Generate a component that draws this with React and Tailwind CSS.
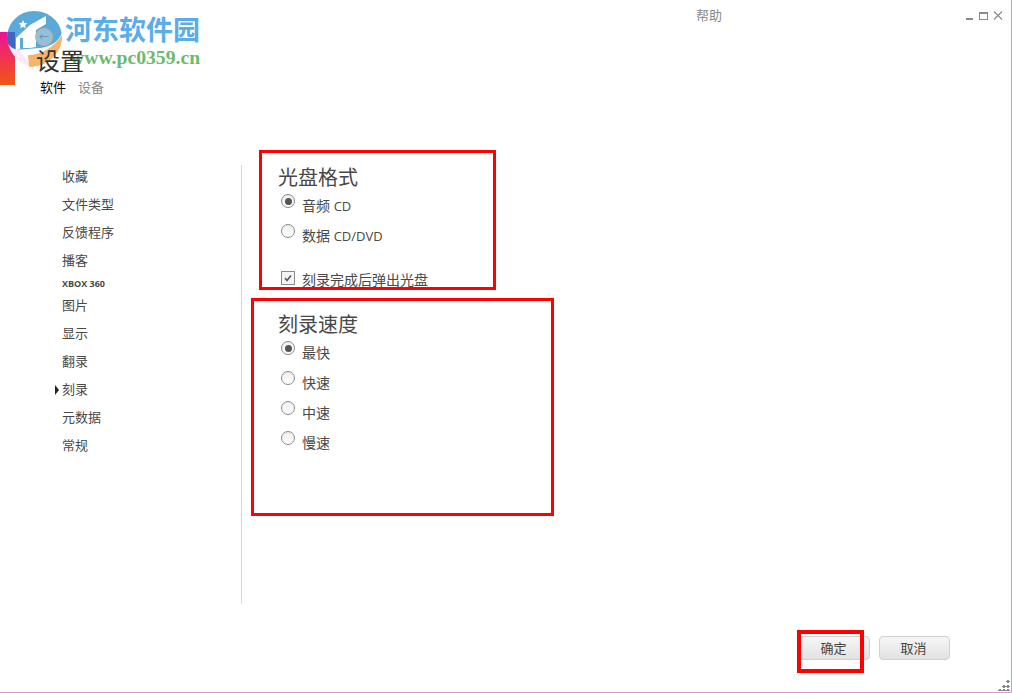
const CJK = "font-['Open_Sans','Noto_Sans_CJK_SC',sans-serif]";

const navItems = [
  { label: "收藏", h: "h-[28px]" },
  { label: "文件类型", h: "h-[28px]" },
  { label: "反馈程序", h: "h-[28px]" },
  { label: "播客", h: "h-[28px]" },
  { label: "XBOX 360", h: "h-[17px]", small: true },
  { label: "图片", h: "h-[28px]" },
  { label: "显示", h: "h-[28px]" },
  { label: "翻录", h: "h-[28px]" },
  { label: "刻录", h: "h-[28px]", active: true },
  { label: "元数据", h: "h-[28px]" },
  { label: "常规", h: "h-[28px]" },
];

const Radio = ({ checked }) => (
  <span className="relative mt-[-2px] flex h-[14px] w-[14px] shrink-0 items-center justify-center rounded-full border border-[#8a8a8a] bg-gradient-to-b from-[#eeeeee] to-white">
    {checked && <span className="h-[7px] w-[7px] rounded-full bg-[#555]" />}
  </span>
);

const RadioRow = ({ children, checked }) => (
  <div className="flex h-[30px] items-start gap-[7px] pl-[3px] text-[14px] leading-[18px] text-[#484848]">
    <Radio checked={checked} />
    <span className="mt-[1px]">{children}</span>
  </div>
);

const Logo = () => (
  <div className="pointer-events-none absolute left-0 top-0">
    <svg width="70" height="90" viewBox="0 0 70 90" className="absolute left-0 top-0">
      <defs>
        <linearGradient id="pinkbar" x1="0" y1="0" x2="0" y2="1">
          <stop offset="0" stopColor="#ee1199" />
          <stop offset="1" stopColor="#f2560f" />
        </linearGradient>
      </defs>
      <rect x="0" y="32" width="15" height="53" fill="url(#pinkbar)" />
      {/* blue dome */}
      <path d="M34 11C50 11 61 23 61.500 34C58 42 50 47 40 48L14 50C9 46 7 42 7 38C7 23 19 11 34 11z" fill="#5aa9d6" />
      <path d="M7 38C7 42 9 46 15 50V32H8z" fill="#3f66c4" />
      {/* white swoosh under the dome */}
      <path d="M8 44C12 56 20 64 30 66C28 60 22 54 20 50C16 50 11 48 8 44z" fill="#fbeaf3" />
      {/* orange crescent */}
      <path d="M62 35C63 52 48 67 29 67L28 55C42 55 54 47 62 35z" fill="#f4b469" />
      {/* house */}
      <path d="M16 38L30 25V48H23V38H20V49L16 50z" fill="#fff" />
      <path d="M30 25L46 16L46 24L36 30V47L30 48z" fill="#fff" />
      <path d="M23 20l1.400 3 3 .3-2.300 2 .7 3-2.800-1.600-2.800 1.600.7-3-2.300-2 3-.3z" fill="#fff" />
    </svg>
    <div className="absolute left-[65px] top-[11px] whitespace-nowrap font-['Noto_Sans_CJK_SC',sans-serif] text-[27px] font-bold leading-[36px] text-[#5aade8]">
      河东软件园
    </div>
    <div className="absolute left-[70px] top-[46px] whitespace-nowrap font-['Liberation_Serif',serif] text-[19.7px] font-bold leading-[22px] text-[#6cba6c]">
      www.pc0359.cn
    </div>
  </div>
);

export default function App() {
  return (
    <div className={`relative flex h-[693px] w-[1012px] flex-col overflow-hidden border-b border-r border-[#f08adc] bg-white ${CJK}`}>
      <Logo />

      {/* title bar */}
      <div className="relative flex h-[30px] items-center justify-end pr-[8px] pt-[1px]">
        <span className="mr-[243px] text-[13px] text-[#8a8a8a]">帮助</span>
        <div className="flex items-center gap-[5px]">
          <svg width="9" height="9" viewBox="0 0 9 9"><rect x="1" y="7" width="7" height="2" fill="#8a8a8a" /></svg>
          <svg width="9" height="9" viewBox="0 0 9 9"><rect x=".5" y="1.500" width="8" height="7" fill="none" stroke="#8a8a8a" /><rect x="0" y="1" width="9" height="2" fill="#8a8a8a" /></svg>
          <svg width="10" height="9" viewBox="0 0 10 9"><path d="M1 .5l8 8M9 .5l-8 8" stroke="#8a8a8a" strokeWidth="1.100" /></svg>
        </div>
      </div>

      {/* header */}
      <div className="relative pl-[36px]">
        <div className="relative mt-[-13px] h-[28px]">
          <span className="absolute left-[-1px] top-[11px] flex h-[18px] w-[18px] items-center justify-center rounded-full border-2 border-[#b4b4b4] bg-white/30 text-[10px] leading-none text-[#888]">←</span>
        </div>
        <h1 className="text-[24px] font-normal leading-[31px] text-[#333]">设置</h1>
        <div className="mt-[3px] flex gap-[12px] pl-[4px] text-[13px] leading-[17px]">
          <span className="text-black">软件</span>
          <span className="text-[#8a8a8a]">设备</span>
        </div>
      </div>

      {/* content */}
      <div className="mt-[69px] flex h-[439px]">
        <div className="w-[242px] shrink-0 border-r border-[#d8d8d8]">
          <div className="mt-[-2px]">
            {navItems.map((item) => (
              <div key={item.label} className={`relative flex items-center pl-[62px] text-[#484848] ${item.h} ${item.small ? "text-[9px] font-bold" : "text-[13px]"}`}>
                {item.active && (
                  <span className="absolute left-[55px] top-[9px] h-0 w-0 border-y-[5px] border-l-[4px] border-y-transparent border-l-[#222]" />
                )}
                {item.label}
              </div>
            ))}
          </div>
        </div>

        <div className="pl-[36px]">
          <h2 className="text-[20px] font-normal leading-[26px] text-[#484848]">光盘格式</h2>
          <div className="mt-[5px]">
            <RadioRow checked>音频 <span className="text-[13px] font-medium">CD</span></RadioRow>
            <RadioRow>数据 <span className="text-[13px] font-medium">CD/DVD</span></RadioRow>
          </div>
          <label className="mt-[15px] flex h-[20px] items-start gap-[6px] pl-[3px] text-[14px] leading-[18px] text-[#484848]">
            <span className="flex h-[14px] w-[14px] shrink-0 items-center justify-center border border-[#8a8a8a] bg-[#f4f4f4]">
              <svg width="10" height="10" viewBox="0 0 10 10"><path d="M2 5l2 2.500 4-5" fill="none" stroke="#555" strokeWidth="1.600" /></svg>
            </span>
            <span className="ml-[1px]">刻录完成后弹出光盘</span>
          </label>

          <h2 className="mt-[21px] text-[20px] font-normal leading-[26px] text-[#484848]">刻录速度</h2>
          <div className="mt-[5px]">
            <RadioRow checked>最快</RadioRow>
            <RadioRow>快速</RadioRow>
            <RadioRow>中速</RadioRow>
            <RadioRow>慢速</RadioRow>
          </div>
        </div>
      </div>

      {/* footer */}
      <div className="mt-[32px] flex justify-end gap-[9px] pr-[61px]">
        {["确定", "取消"].map((b) => (
          <button key={b} className="h-[24px] w-[71px] rounded-[4px] border border-[#d0d0d0] bg-gradient-to-b from-[#f6f6f6] to-[#e2e2e2] pr-[2px] text-[13px] leading-[22px] text-[#444]">
            {b}
          </button>
        ))}
      </div>

      {/* resize grip */}
      <svg width="13" height="12" viewBox="0 0 13 12" className="absolute bottom-0 right-0">
        <path d="M9 0h2v1H9zM8 1h4v1H8zM9 2h2v1H9zM5 5h2v1H5zM4 6h4v1H4zM5 7h2v1H5zM9 5h2v1H9zM8 6h4v1H8zM9 7h2v1H9zM1 9h2v1H1zM0 10h4v1H0zM5 9h2v1H5zM4 10h4v1H4zM9 9h2v1H9zM8 10h4v1H8z" fill="#888" />
      </svg>

      {/* annotations */}
      <div className="absolute left-[259px] top-[150px] h-[140px] w-[237px] border-[3px] border-[#ff0000]" />
      <div className="absolute left-[251px] top-[298px] h-[218px] w-[303px] border-[3px] border-[#ff0000]" />
      <div className="absolute left-[797px] top-[630px] h-[43px] w-[67px] border-[4px] border-[#ff0000]" />
    </div>
  );
}
